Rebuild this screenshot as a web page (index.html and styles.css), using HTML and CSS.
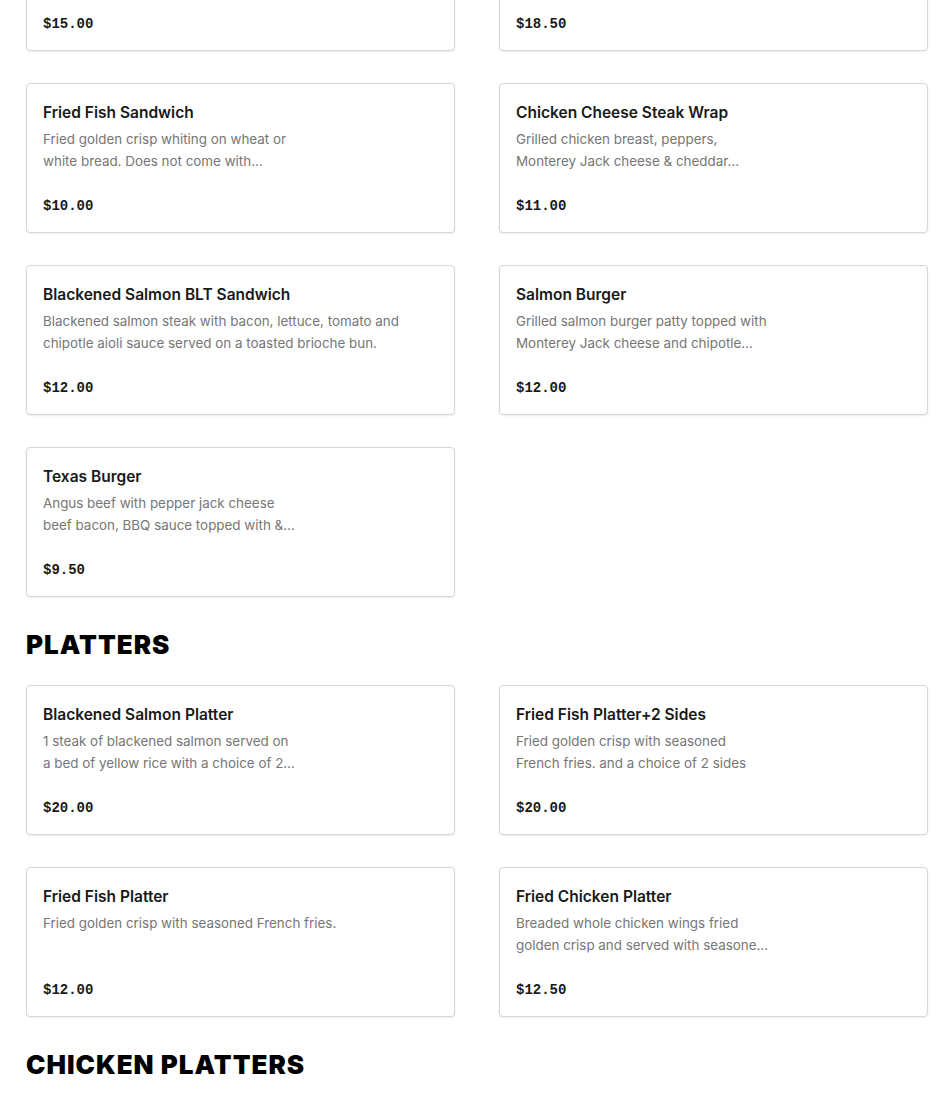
FILE: index.html
```html
<!DOCTYPE html>
<html lang="en">
<head>
<meta charset="utf-8">
<title>Menu</title>
<link rel="stylesheet" href="styles.css">
</head>
<body>
<main class="menu">
  <section class="section">
    <div class="grid">
      <article class="card">
        <h3 class="card-title">Catfish Platter</h3>
        <p class="card-desc narrow">Fried golden crisp catfish fillets served with seasoned French…</p>
        <div class="card-price">$15.00</div>
      </article>
      <article class="card">
        <h3 class="card-title">Shrimp &amp; Fish Combo</h3>
        <p class="card-desc narrow">Fried golden crisp shrimp and whiting served with seasoned…</p>
        <div class="card-price">$18.50</div>
      </article>
      <article class="card">
        <h3 class="card-title">Fried Fish Sandwich</h3>
        <p class="card-desc narrow">Fried golden crisp whiting on wheat or white bread. Does not come with…</p>
        <div class="card-price">$10.00</div>
      </article>
      <article class="card">
        <h3 class="card-title">Chicken Cheese Steak Wrap</h3>
        <p class="card-desc narrow">Grilled chicken breast, peppers, Monterey Jack cheese &amp; cheddar…</p>
        <div class="card-price">$11.00</div>
      </article>
      <article class="card">
        <h3 class="card-title">Blackened Salmon BLT Sandwich</h3>
        <p class="card-desc">Blackened salmon steak with bacon, lettuce, tomato and chipotle aioli sauce served on a toasted brioche bun.</p>
        <div class="card-price">$12.00</div>
      </article>
      <article class="card">
        <h3 class="card-title">Salmon Burger</h3>
        <p class="card-desc narrow">Grilled salmon burger patty topped with Monterey Jack cheese and chipotle…</p>
        <div class="card-price">$12.00</div>
      </article>
      <article class="card">
        <h3 class="card-title">Texas Burger</h3>
        <p class="card-desc narrow">Angus beef with pepper jack cheese beef bacon, BBQ sauce topped with &amp;…</p>
        <div class="card-price">$9.50</div>
      </article>
    </div>
  </section>

  <section class="section">
    <h2 class="section-title">PLATTERS</h2>
    <div class="grid">
      <article class="card">
        <h3 class="card-title">Blackened Salmon Platter</h3>
        <p class="card-desc narrow">1 steak of blackened salmon served on a bed of yellow rice with a choice of 2…</p>
        <div class="card-price">$20.00</div>
      </article>
      <article class="card">
        <h3 class="card-title">Fried Fish Platter+2 Sides</h3>
        <p class="card-desc narrow">Fried golden crisp with seasoned French fries. and a choice of 2 sides</p>
        <div class="card-price">$20.00</div>
      </article>
      <article class="card">
        <h3 class="card-title">Fried Fish Platter</h3>
        <p class="card-desc">Fried golden crisp with seasoned French fries.</p>
        <div class="card-price">$12.00</div>
      </article>
      <article class="card">
        <h3 class="card-title">Fried Chicken Platter</h3>
        <p class="card-desc narrow">Breaded whole chicken wings fried golden crisp and served with seasone…</p>
        <div class="card-price">$12.50</div>
      </article>
    </div>
  </section>

  <section class="section">
    <h2 class="section-title">CHICKEN PLATTERS</h2>
  </section>
</main>
</body>
</html>
```

FILE: styles.css
```css
* { box-sizing: border-box; }

html, body {
  margin: 0;
  padding: 0;
  background: #ffffff;
}

body {
  font-family: Inter, "Noto Sans", "Liberation Sans", sans-serif;
  color: #191919;
  overflow: hidden;
}

.menu {
  margin-top: -99px;
  padding: 0 22px 0 26px;
}

.section + .section {
  margin-top: 32px;
}

.section-title {
  margin: 0 0 24px;
  font-family: Inter, "Liberation Sans", sans-serif;
  font-weight: 900;
  font-size: 26px;
  line-height: 32px;
  letter-spacing: 1px;
  color: #000;
}

.grid {
  display: grid;
  grid-template-columns: 429px 429px;
  column-gap: 44px;
  row-gap: 32px;
}

.card {
  height: 150px;
  border: 1px solid #d6d6d6;
  border-radius: 4px;
  padding: 17px 16px 15px;
  background: #fff;
  box-shadow: 0 1px 2px rgba(0, 0, 0, 0.08);
}

.card-title {
  margin: 0;
  font-size: 15.5px;
  font-weight: 600;
  line-height: 24px;
  color: #191919;
}

.card-desc {
  margin: 3px 0 0;
  height: 44px;
  font-size: 13.4px;
  line-height: 22px;
  color: #767676;
  overflow: hidden;
}

.card-desc.narrow {
  max-width: 256px;
}

.card-price {
  margin-top: 23px;
  font-family: "Liberation Mono", "DejaVu Sans Mono", monospace;
  font-weight: 700;
  font-size: 14px;
  line-height: 22px;
  color: #191919;
}
```
